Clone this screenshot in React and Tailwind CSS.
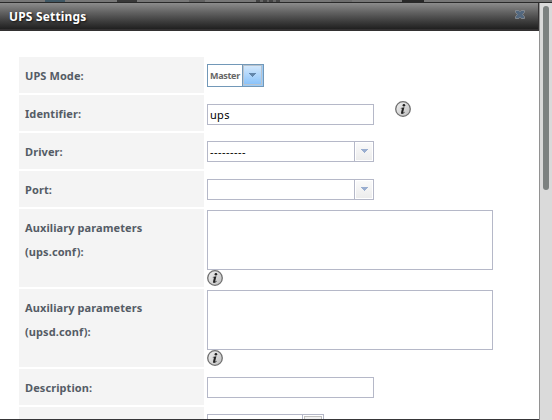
import React from "react";

function Arrow({ className = "" }) {
  return (
    <svg className={className} width="8" height="4" viewBox="0 0 8 4" shapeRendering="crispEdges">
      <path d="M0 0H7V1H6V2H5V3H4V4H3V3H2V2H1V1H0Z" fill="currentColor" />
    </svg>
  );
}

function Info() {
  return (
    <svg className="block shrink-0" width="16" height="16" viewBox="0 0 16 16">
      <defs>
        <linearGradient id="disc" x1="0" y1="0" x2="1" y2="1">
          <stop offset="0" stopColor="#f1f1f1" />
          <stop offset="0.5" stopColor="#d8d8d8" />
          <stop offset="1" stopColor="#bcbcbc" />
        </linearGradient>
      </defs>
      <circle cx="8" cy="8" r="7.3" fill="url(#disc)" stroke="#707070" strokeWidth="1.3" />
      <circle cx="8.9" cy="4.2" r="1.3" fill="#222" />
      <path d="M5.8 6.9L9.4 6.3L8.2 11.3Q8.1 12 9.7 10.7L10 11.1Q8.2 13.2 6.8 13Q5.7 12.7 6.1 11.2L7 7.6L5.8 7.4Z" fill="#222" />
    </svg>
  );
}

function Row({ label, tall, children }) {
  return (
    <div className={`flex shrink-0 ${tall ? "h-[78px]" : "h-9"}`}>
      <div className="w-[185px] shrink-0 bg-[#f4f4f4] pt-[7px] pl-1.5 text-[11px] leading-6 font-bold tracking-[0.09px] whitespace-pre-line text-[#555c66]">
        {label}
      </div>
      <div className="flex-1 pl-[3px]">{children}</div>
    </div>
  );
}

function Combo({ value }) {
  return (
    <div className="mt-2 flex h-[21px] w-[167px] border border-[#b5b8c8] bg-white">
      <div className="flex-1 pl-[2px] text-[11px] leading-[19px] tracking-[0.45px] text-black">{value}</div>
      <div className="w-[19px] border-l border-[#b5b8c8] p-px">
        <div className="flex h-full items-start justify-center bg-linear-to-b from-[#fafafa] to-[#ececec] pt-[6px] pl-px">
          <Arrow className="text-[#9aaed0]" />
        </div>
      </div>
    </div>
  );
}

export default function App() {
  return (
    <div className="flex h-[420px] w-[552px] flex-col overflow-hidden bg-white font-['Noto_Sans','Open_Sans',sans-serif]">
      <div className="flex h-[3px] shrink-0 border-b border-[#292929] bg-[#777] pl-[45px]">
        <div className="h-[2px] w-[20px] bg-[#405865]" />
        <div className="ml-[52px] h-[2px] w-[20px] bg-[#383838]" />
        <div className="ml-[52px] h-[2px] w-[16px] bg-[#626262]" />
        <div className="ml-[51px] flex h-[2px] w-[24px] justify-between bg-[#666]">
          <div className="w-1 bg-[#444]" />
          <div className="w-1 bg-[#444]" />
          <div className="w-1 bg-[#444]" />
          <div className="w-1 bg-[#444]" />
        </div>
        <div className="ml-[51px] h-[2px] w-[21px] bg-[#6e6e6e]" />
        <div className="ml-[50px] h-[2px] w-[22px] bg-[#292929]" />
      </div>
      <div className="flex min-h-0 flex-1">
        <div className="flex w-[539px] shrink-0 flex-col overflow-hidden border-b border-[#363638]">
          <div className="flex h-7 shrink-0 justify-between border-r border-b-2 border-[#333132] bg-linear-to-b from-[#8c8c8c] to-[#202020] pr-[13px] pl-[9px]">
            <h1 className="text-[12px] leading-[27px] font-bold tracking-[0.17px] text-white [text-shadow:1px_1px_2px_#111]">UPS Settings</h1>
            <svg className="mt-[7px]" width="10" height="9" viewBox="0 0 10 9">
              <path d="M.5.5H3.8L5 1.8L6.2 .5H9.5V2.3L7.6 4.5L9.5 6.7V8.5H6.2L5 7.2L3.8 8.5H.5V6.7L2.4 4.5L.5 2.3Z" fill="#52677e" stroke="#8d9196" strokeWidth="0.8" />
            </svg>
          </div>
          <div className="flex flex-col gap-[2px] pt-[26px] pl-[19px]">
            <Row label="UPS Mode:">
              <div className="mt-[7px] flex h-[23px] w-[57px] border border-[#7298b8] bg-white">
                <div className="w-[34px] shrink-0 pl-[2px] text-[9px] leading-[22px] font-bold tracking-[-0.3px] text-[#666]">Master</div>
                <div className="w-[21px] border-l border-[#7298b8] bg-[#9ccaf5]">
                  <div className="flex h-[20px] w-[19px] justify-center border border-[#b9c3cd] bg-linear-to-b from-[#d2e7fb] to-[#8ac3fa] pt-[7px]">
                    <Arrow className="text-[#6286ab]" />
                  </div>
                </div>
              </div>
            </Row>
            <Row label="Identifier:">
              <div className="flex gap-[21px]">
                <input className="mt-[9px] block h-[21px] w-[167px] border border-[#b5b8c8] px-[2px] py-0 text-[11px] tracking-[0.3px] text-black outline-none" defaultValue="ups" />
                <div className="mt-[6px]"><Info /></div>
              </div>
            </Row>
            <Row label="Driver:"><Combo value="---------" /></Row>
            <Row label="Port:"><Combo value="" /></Row>
            <Row tall label={"Auxiliary parameters\n(ups.conf):"}>
              <textarea className="mt-px block h-[60px] w-[286px] resize-none border border-[#b5b8c8] outline-none" />
              <Info />
            </Row>
            <Row tall label={"Auxiliary parameters\n(upsd.conf):"}>
              <textarea className="mt-px block h-[60px] w-[286px] resize-none border border-[#b5b8c8] outline-none" />
              <Info />
            </Row>
            <Row label="Description:">
              <input className="mt-2 block h-[21px] w-[167px] border border-[#b5b8c8] outline-none" />
            </Row>
            <Row label="">
              <div className="mt-[7px] flex h-[21px] w-[117px] border border-[#b5b8c8]">
                <div className="flex-1" />
                <div className="w-[21px] border-l border-[#b5b8c8] p-px">
                  <div className="h-full border border-[#c0c0c0] bg-[#f0f0f0]" />
                </div>
              </div>
            </Row>
          </div>
        </div>
        <div className="w-[13px] shrink-0 border-l border-[#929292] bg-[#dadada] pt-[3px] pl-[3px]">
          <div className="h-[184px] w-[6px] rounded-full bg-[#7c8180]" />
        </div>
      </div>
    </div>
  );
}
